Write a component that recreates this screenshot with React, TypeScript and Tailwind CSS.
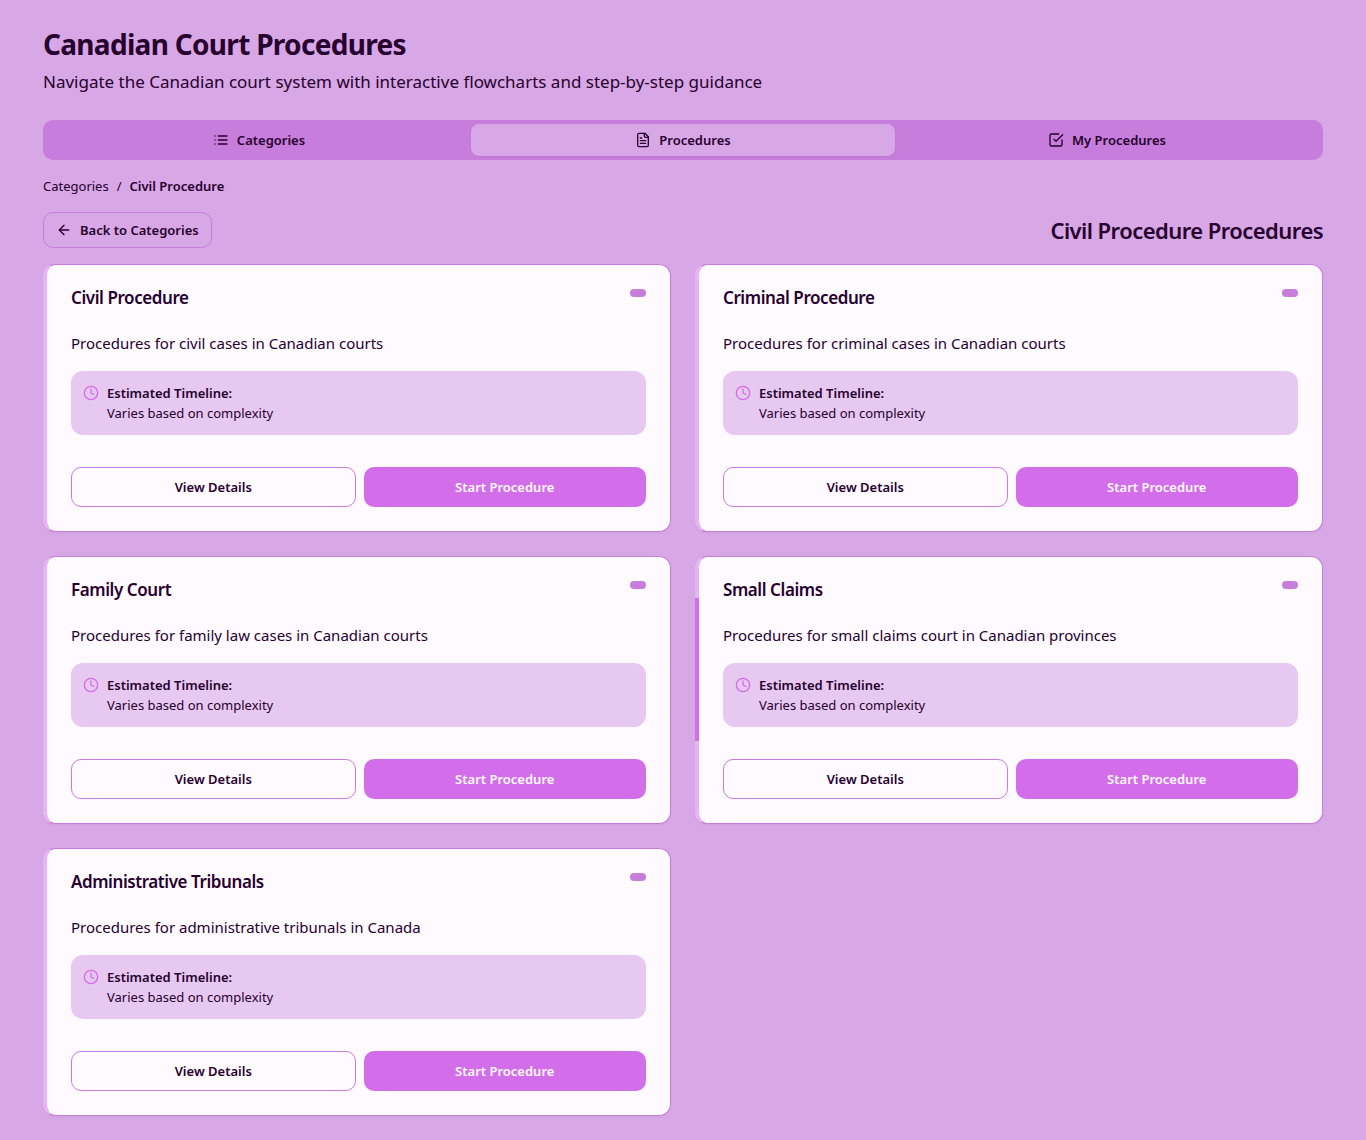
import type { ReactNode } from "react";
import { ArrowLeft, Clock } from "lucide-react";

type Procedure = { title: string; description: string; active?: boolean };

const procedures: Procedure[] = [
  { title: "Civil Procedure", description: "Procedures for civil cases in Canadian courts" },
  { title: "Criminal Procedure", description: "Procedures for criminal cases in Canadian courts" },
  { title: "Family Court", description: "Procedures for family law cases in Canadian courts" },
  { title: "Small Claims", description: "Procedures for small claims court in Canadian provinces", active: true },
  { title: "Administrative Tribunals", description: "Procedures for administrative tribunals in Canada" },
];

function Icon({ children }: { children: ReactNode }) {
  return (
    <svg
      viewBox="0 0 24 24"
      fill="none"
      stroke="currentColor"
      strokeWidth="2"
      strokeLinecap="round"
      strokeLinejoin="round"
      aria-hidden="true"
      className="size-4 shrink-0"
    >
      {children}
    </svg>
  );
}

const tabs = [
  {
    label: "Categories",
    icon: <path d="M8 6h13M8 12h13M8 18h13M3 6h.01M3 12h.01M3 18h.01" />,
  },
  {
    label: "Procedures",
    icon: (
      <>
        <path d="M15 2H6a2 2 0 0 0-2 2v16a2 2 0 0 0 2 2h12a2 2 0 0 0 2-2V7Z" />
        <path d="M14 2v4a2 2 0 0 0 2 2h4M10 9H8M16 13H8M16 17H8" />
      </>
    ),
  },
  {
    label: "My Procedures",
    icon: (
      <>
        <path d="m9 11 3 3L22 4" />
        <path d="M21 12v7a2 2 0 0 1-2 2H5a2 2 0 0 1-2-2V5a2 2 0 0 1 2-2h11" />
      </>
    ),
  },
];

function ProcedureCard({ title, description, active }: Procedure) {
  return (
    <article className="relative rounded-xl border border-l-4 border-[#c77ddb] border-l-[#e7b5f5] bg-[#fffaff] p-6 shadow-xs">
      {active && <span className="absolute top-[41px] -left-1 h-[143px] w-1 bg-[#d36eea]" />}
      <div className="flex items-start justify-between">
        <h3 className="text-[17px] leading-[18px] font-semibold tracking-tight">{title}</h3>
        <span className="h-2 w-4 rounded-full bg-[#c77ddb]" />
      </div>
      <p className="mt-6 text-[15px] leading-6">{description}</p>
      <div className="mt-4 flex items-start gap-2 rounded-xl bg-[#e6c8f0] p-3 text-[13px] leading-5">
        <Clock className="mt-0.5 size-4 shrink-0 text-[#d36eea]" />
        <div>
          <p className="font-semibold">Estimated Timeline:</p>
          <p>Varies based on complexity</p>
        </div>
      </div>
      <div className="mt-8 flex gap-2">
        <button className="h-10 flex-1 rounded-[10px] border border-[#c77ddb] text-[13px] leading-5 font-semibold">
          View Details
        </button>
        <button className="h-10 flex-1 rounded-[10px] bg-[#d36eea] text-[13px] leading-5 font-semibold text-[#fffaff]">
          Start Procedure
        </button>
      </div>
    </article>
  );
}

export default function App() {
  return (
    <div className="min-h-screen bg-[#d8a7e5] px-6 py-6 font-['Noto_Sans','Open_Sans',sans-serif] text-[#26002e]">
      <main className="mx-auto max-w-7xl">
        <header>
          <h1 className="text-[28px] leading-10 font-bold tracking-tight">Canadian Court Procedures</h1>
          <p className="mt-1 text-[17px] leading-7">
            Navigate the Canadian court system with interactive flowcharts and step-by-step guidance
          </p>
        </header>

        <div role="tablist" className="mt-6 grid h-10 grid-cols-3 rounded-[10px] bg-[#c77ddb] p-1">
          {tabs.map(({ label, icon }) => (
            <button
              key={label}
              role="tab"
              aria-selected={label === "Procedures"}
              className="flex items-center justify-center gap-2 rounded-lg text-[13px] leading-5 font-semibold aria-selected:bg-[#d8a7e5] aria-selected:shadow-xs"
            >
              <Icon>{icon}</Icon>
              {label}
            </button>
          ))}
        </div>

        <nav aria-label="Breadcrumb" className="mt-4 flex gap-2 text-[13px] leading-5">
          <a href="#categories">Categories</a>
          <span>/</span>
          <span className="font-semibold">Civil Procedure</span>
        </nav>

        <div className="mt-4 flex items-center justify-between">
          <button className="flex h-9 items-center gap-2 rounded-[10px] border border-[#c77ddb] px-3 text-[13px] leading-5 font-semibold">
            <ArrowLeft className="size-4" />
            Back to Categories
          </button>
          <h2 className="text-[22px] leading-8 font-semibold tracking-tight">Civil Procedure Procedures</h2>
        </div>

        <section className="mt-4 grid gap-6 md:grid-cols-2">
          {procedures.map((procedure) => (
            <ProcedureCard key={procedure.title} {...procedure} />
          ))}
        </section>
      </main>
    </div>
  );
}
